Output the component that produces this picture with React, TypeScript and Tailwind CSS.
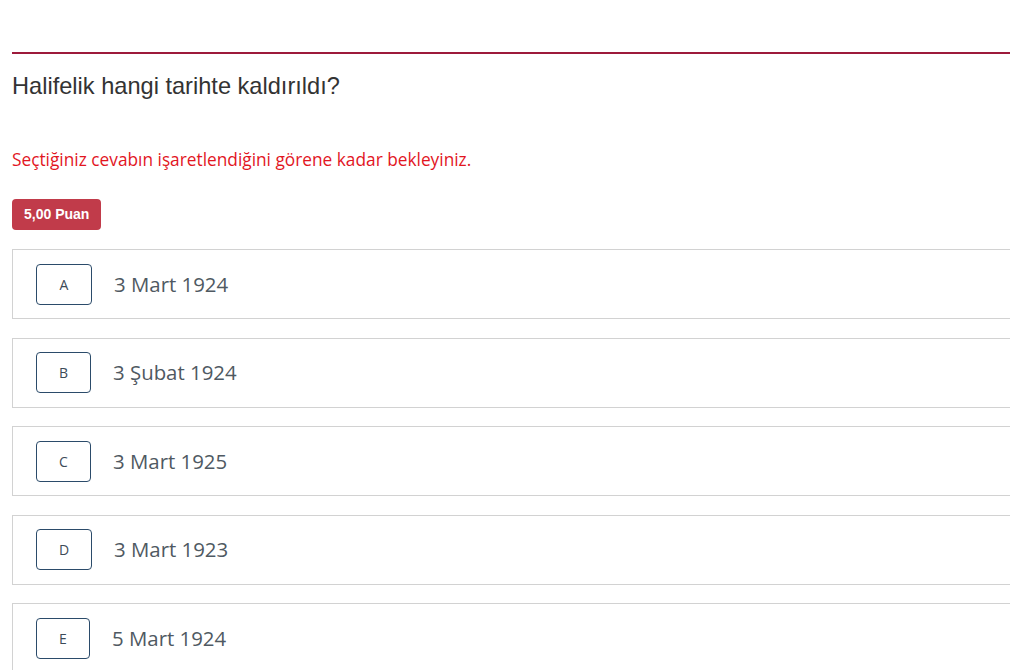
import React from "react";

const options = [
  { l: "A", t: "3 Mart 1924", w: "w-[56px]" },
  { l: "B", t: "3 Şubat 1924", w: "w-[55px]" },
  { l: "C", t: "3 Mart 1925", w: "w-[55px]" },
  { l: "D", t: "3 Mart 1923", w: "w-[56px]" },
  { l: "E", t: "5 Mart 1924", w: "w-[54px]" },
];

export default function App() {
  return (
    <div className="w-[1010px] h-[670px] overflow-hidden bg-white">
      <div className="pl-3 pt-[52px] w-[1030px]">
        <div className="h-[2px] bg-[#9d1a3b]" />
        <h2 className="mt-[18px] text-[23.6px] leading-[28px] text-[#333333] font-['Liberation_Sans',Arial,sans-serif]">
          Halifelik hangi tarihte kaldırıldı?
        </h2>
        <p className="mt-[50px] text-[17.3px] leading-[20px] text-[#e2161f] font-['Open_Sans',sans-serif]">
          Seçtiğiniz cevabın işaretlendiğini görene kadar bekleyiniz.
        </p>
        <div className="mt-[29px] flex">
          <span className="inline-flex items-center h-[31px] px-[12px] rounded-[4px] bg-[#c13b4a] text-white text-[14px] font-bold font-['Liberation_Sans',Arial,sans-serif]">
            5,00 Puan
          </span>
        </div>
        <div className="mt-[19px] flex flex-col gap-[18.5px]">
          {options.map((o) => (
            <div
              key={o.l}
              className="h-[70px] border border-[#d2d2d2] flex items-center pl-[23px]"
            >
              <div
                className={`${o.w} h-[41px] border border-[#2b4b6a] rounded-[4px] flex items-center justify-center text-[14px] text-[#3d4b58] font-['Open_Sans',sans-serif]`}
              >
                {o.l}
              </div>
              <span className="ml-[22px] text-[20.4px] text-[#4f5962] font-['Open_Sans',sans-serif]">
                {o.t}
              </span>
            </div>
          ))}
        </div>
      </div>
    </div>
  );
}
